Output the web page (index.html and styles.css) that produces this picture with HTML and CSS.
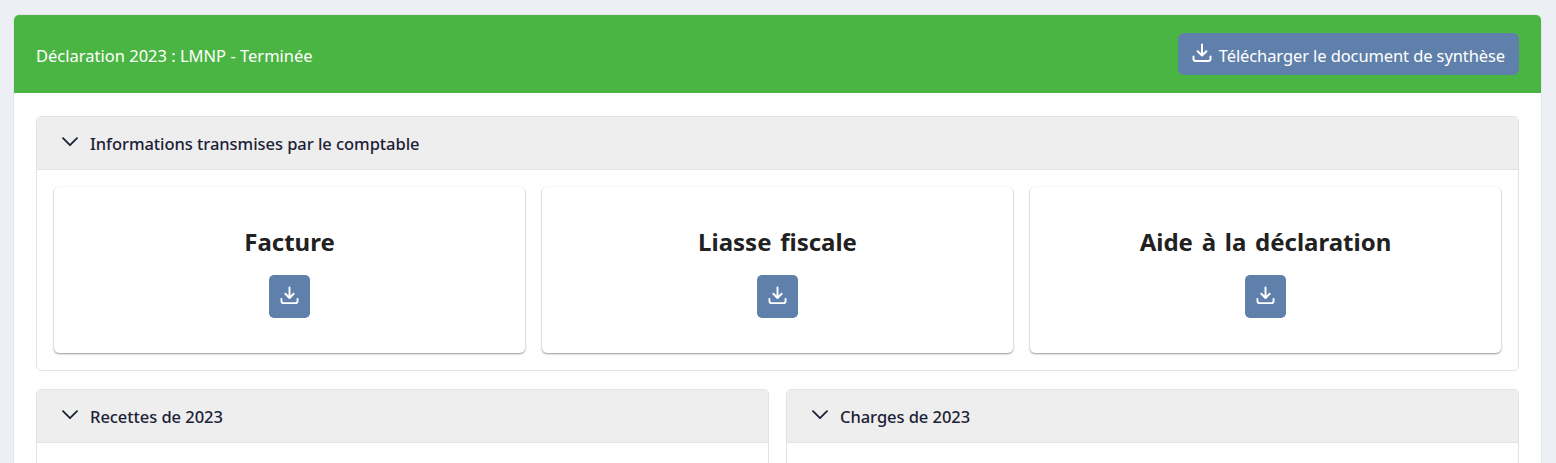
FILE: index.html
```html
<!DOCTYPE html>
<html lang="fr">
<head>
  <meta charset="UTF-8">
  <meta name="viewport" content="width=device-width, initial-scale=1.0">
  <title>Déclaration 2023</title>
  <link rel="stylesheet" href="styles.css">
</head>
<body>

<svg class="icon-defs" width="0" height="0">
  <symbol id="download" viewBox="0 0 20 20">
    <path d="M10 1.5v11M5.6 8.2l4.4 4.4 4.4-4.4M1.5 13.5v2.2c0 1.3 1 2.3 2.3 2.3h12.4c1.3 0 2.3-1 2.3-2.3v-2.2" fill="none" stroke="currentColor" stroke-width="2" stroke-linecap="round" stroke-linejoin="round"/>
  </symbol>
  <symbol id="chevron" viewBox="0 0 16 10">
    <path d="M1 1.2l7 7 7-7" fill="none" stroke="currentColor" stroke-width="1.8" stroke-linecap="round" stroke-linejoin="round"/>
  </symbol>
</svg>

<div class="declaration">
  <div class="declaration-header">
    <span class="declaration-title">Déclaration 2023 : LMNP - Terminée</span>
    <button class="btn-synthese">
      <svg class="icon-synthese"><use href="#download"></use></svg>
      <span class="btn-label">Télécharger le document de synthèse</span>
    </button>
  </div>

  <div class="declaration-body">
    <div class="panel">
      <div class="panel-header">
        <svg class="chevron"><use href="#chevron"></use></svg>
        Informations transmises par le comptable
      </div>
      <div class="documents">
        <div class="document">
          <h2>Facture</h2>
          <button class="btn-download"><svg class="icon-download"><use href="#download"></use></svg></button>
        </div>
        <div class="document">
          <h2>Liasse fiscale</h2>
          <button class="btn-download"><svg class="icon-download"><use href="#download"></use></svg></button>
        </div>
        <div class="document">
          <h2>Aide à la déclaration</h2>
          <button class="btn-download"><svg class="icon-download"><use href="#download"></use></svg></button>
        </div>
      </div>
    </div>

    <div class="columns">
      <div class="panel panel-open">
        <div class="panel-header">
          <svg class="chevron"><use href="#chevron"></use></svg>
          Recettes de 2023
        </div>
      </div>
      <div class="panel panel-open">
        <div class="panel-header">
          <svg class="chevron"><use href="#chevron"></use></svg>
          Charges de 2023
        </div>
      </div>
    </div>
  </div>
</div>

</body>
</html>
```

FILE: styles.css
```css
html, body {
  height: 100%;
  overflow: hidden;
}
body {
  margin: 0;
  padding: 15px 15px 0 14px;
  box-sizing: border-box;
  background-color: #eceff4;
  font-family: "Noto Sans", "Open Sans", sans-serif;
  color: #212529;
}
.icon-defs {
  display: block;
  position: absolute;
}
button {
  border: none;
  font-family: inherit;
  cursor: pointer;
  color: white;
  background-color: #5f80aa;
}
.declaration {
  background: white;
  border-radius: 5px 5px 0 0;
  height: 448px;
  box-shadow: 0 0 0 1px #e4e6ec;
}
.declaration-header {
  display: flex;
  justify-content: space-between;
  align-items: center;
  height: 78px;
  padding: 0 22px;
  background-color: #4bb543;
  border-radius: 5px 5px 0 0;
}
.declaration-title {
  padding-top: 3px;
  color: white;
  font-size: 16.5px;
}
.btn-synthese {
  display: flex;
  align-items: center;
  gap: 7px;
  height: 42px;
  padding: 0 14px;
  border-radius: 6px;
  font-size: 16.5px;
  letter-spacing: -0.1px;
}
.btn-label {
  padding-top: 3px;
}
.icon-synthese {
  width: 20px;
  height: 20px;
  margin-bottom: 3px;
}
.declaration-body {
  padding: 23px 22px 0;
}
.panel {
  border: 1px solid #e1e3e9;
  border-radius: 5px;
  background: white;
}
.panel-open {
  flex: 1;
  height: 73px;
  border-bottom: none;
  border-radius: 5px 5px 0 0;
}
.panel-header {
  display: flex;
  align-items: center;
  height: 52px;
  padding-left: 25px;
  background-color: #eeeeee;
  border-bottom: 1px solid #e1e3e9;
  border-radius: 5px 5px 0 0;
  font-size: 16.5px;
  font-weight: 500;
  letter-spacing: -0.05px;
  color: #1c2236;
}
.chevron {
  width: 16px;
  height: 10px;
  margin-right: 12px;
  margin-bottom: 3px;
}
.documents {
  display: flex;
  gap: 17px;
  padding: 17px;
}
.document {
  flex: 1;
  display: flex;
  flex-direction: column;
  align-items: center;
  height: 166px;
  border-radius: 5px;
  box-shadow: 0 1px 2px rgba(0, 0, 0, 0.4), 0 0 3px rgba(0, 0, 0, 0.04);
}
.document h2 {
  margin: 38px 0 16px;
  font-size: 24px;
  line-height: 34px;
  font-weight: 700;
  word-spacing: 2.5px;
  color: #212121;
}
.btn-download {
  display: flex;
  align-items: center;
  justify-content: center;
  width: 41px;
  height: 43px;
  padding: 0 0 2px;
  border-radius: 5px;
}
.icon-download {
  width: 19px;
  height: 19px;
}
.columns {
  display: flex;
  gap: 17px;
  margin-top: 18px;
}
```
